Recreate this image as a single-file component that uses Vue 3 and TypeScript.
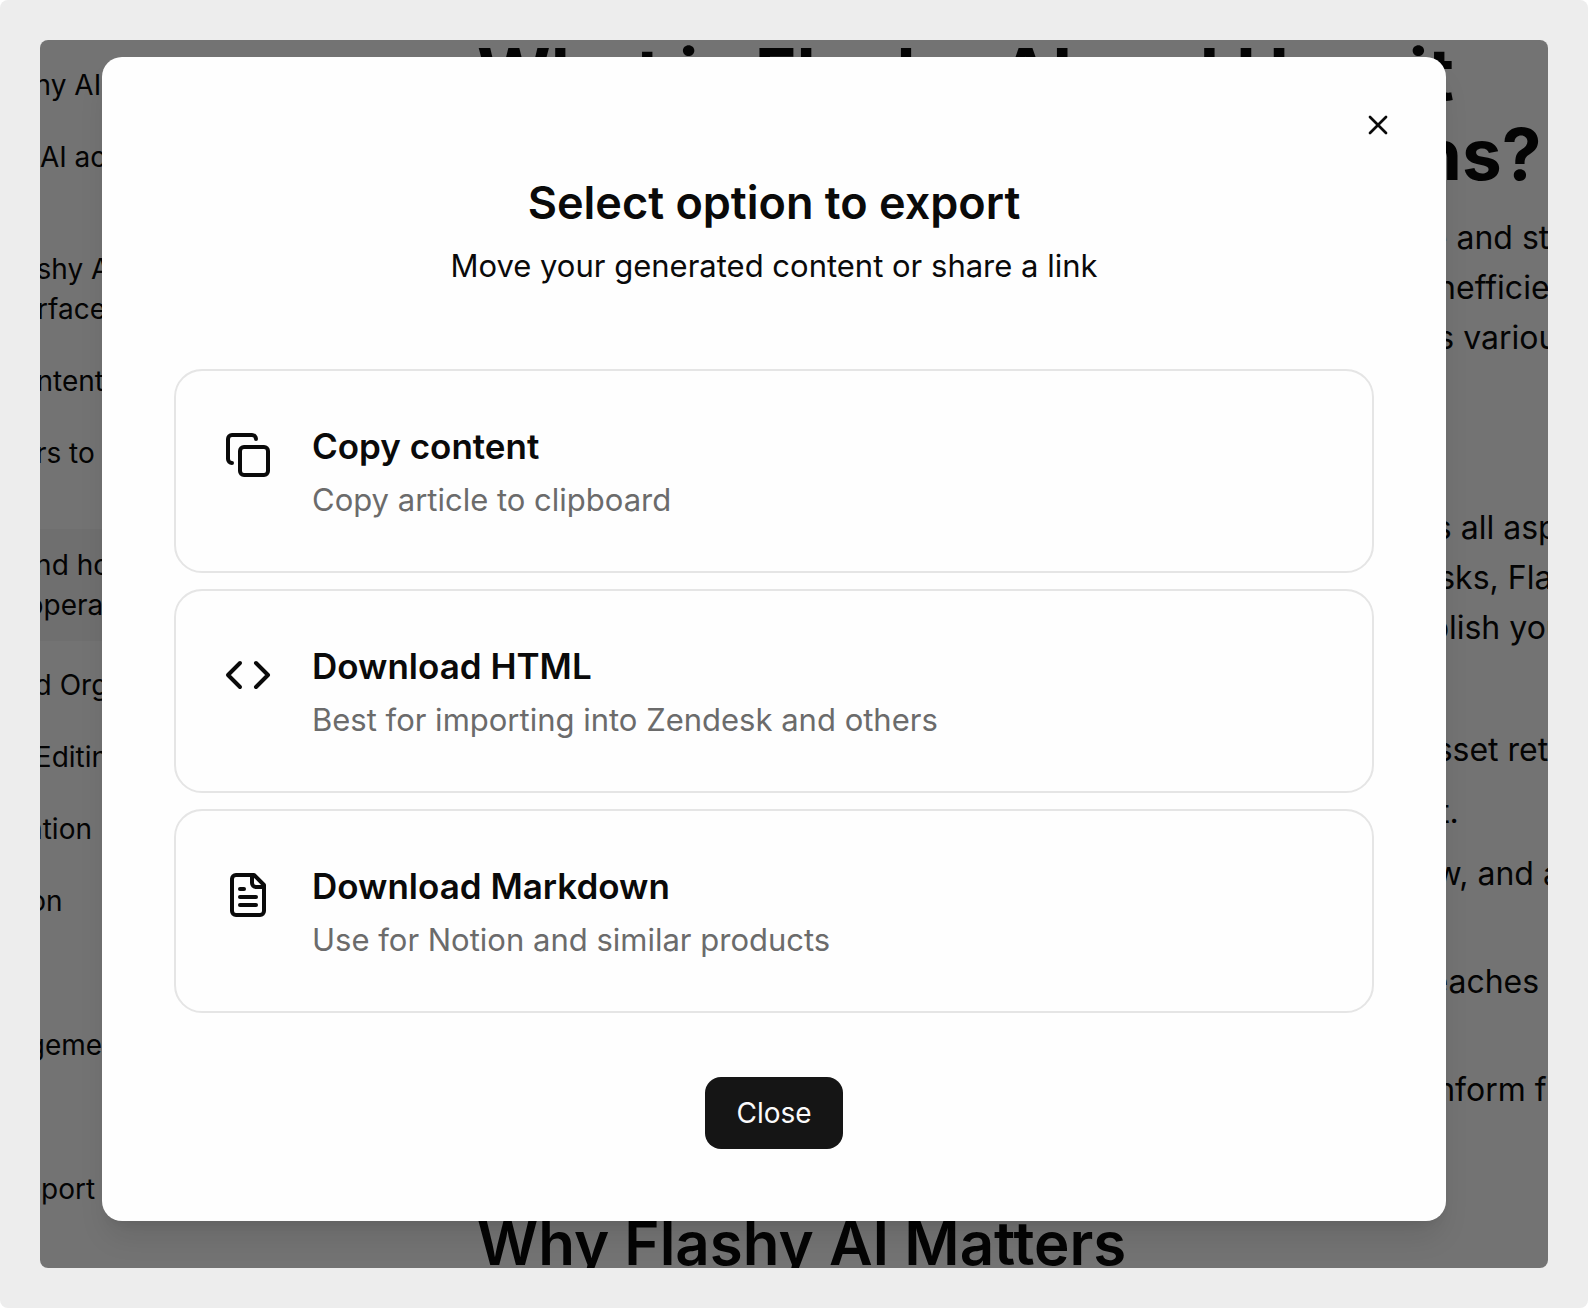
<script setup lang="ts">
interface TocItem {
  lines: string[]
  active?: boolean
}

interface ExportOption {
  title: string
  description: string
  icon: string[]
}

const toc: TocItem[] = [
  { lines: ['How does Flashy AI work'] },
  { lines: ['What is Flashy AI accuracy', 'and tone'] },
  { lines: ['with simple Flashy AI', 'its modern interface'] },
  { lines: ['Writing and Content'] },
  { lines: ['Document Users to', 'content'] },
  { lines: ['Try Flashy AI and how it', 'great modern operations'], active: true },
  { lines: ['Try Storage and Organize'] },
  { lines: ['Asset Content Editing'] },
  { lines: ['Project Automation'] },
  { lines: ['Team Integration'] },
  { lines: ['Workflow'] },
  { lines: ['Process Management'] },
  { lines: ['Analytics'] },
  { lines: ['Data Team Support'] },
]

const headline = ['What is Flashy AI and How it', 'Improves Editorial Operations?']

const intro = [
  'Flashy AI is a reliable platform that helps a teams write, organize and store',
  'knowledge in one place. It replaces any tools, any reviews and inefficient',
  'and scattered documents, and it brings a modern content across various',
]

const features = [
  'With a complete editor and advanced assistant, Flashy AI covers all aspects',
  'of the content lifecycle. From any drafts to custom publishing tasks, Flashy',
  'gives you the important tools to write, review, important and publish your',
]

const capabilities: string[][] = [
  ['Asset library: find powerful files in seconds with advanced asset retrieval'],
  ['Editing: improve clear articles with full suggestions in context.'],
  ['Collaboration: invite useful people to comment, weekly review, and approve', 'every change'],
  ['Publishing: export great articles so that automated content reaches the', 'right readers'],
  ['Analytics: measure simple articles and let advanced results inform future', 'updates'],
]

const options: ExportOption[] = [
  {
    title: 'Copy content',
    description: 'Copy article to clipboard',
    icon: [
      'M10 8h10a2 2 0 0 1 2 2v10a2 2 0 0 1-2 2H10a2 2 0 0 1-2-2V10a2 2 0 0 1 2-2z',
      'M4 16c-1.1 0-2-.9-2-2V4c0-1.1.9-2 2-2h10c1.1 0 2 .9 2 2',
    ],
  },
  {
    title: 'Download HTML',
    description: 'Best for importing into Zendesk and others',
    icon: ['m16 18 6-6-6-6', 'm8 6-6 6 6 6'],
  },
  {
    title: 'Download Markdown',
    description: 'Use for Notion and similar products',
    icon: [
      'M15 2H6a2 2 0 0 0-2 2v16a2 2 0 0 0 2 2h12a2 2 0 0 0 2-2V7Z',
      'M14 2v4a2 2 0 0 0 2 2h4',
      'M10 9H8',
      'M16 13H8',
      'M16 17H8',
    ],
  },
]
</script>

<template>
  <div class="shell">
    <div class="frame">
      <div class="page" aria-hidden="true">
        <nav class="toc">
          <div v-for="(item, i) in toc" :key="i" class="toc-item" :class="{ active: item.active }">
            <span v-for="line in item.lines" :key="line" class="line">{{ line }}</span>
          </div>
        </nav>
        <article class="article">
          <h1><span v-for="line in headline" :key="line" class="line">{{ line }}</span></h1>
          <p><span v-for="line in intro" :key="line" class="line">{{ line }}</span></p>
          <h2>How Flashy AI Works</h2>
          <p><span v-for="line in features" :key="line" class="line">{{ line }}</span></p>
          <p class="list-intro">Core capabilities:</p>
          <ul>
            <li v-for="(item, i) in capabilities" :key="i">
              <span v-for="line in item" :key="line" class="line">{{ line }}</span>
            </li>
          </ul>
          <h2>Why Flashy AI Matters</h2>
        </article>
      </div>

      <div class="overlay">
        <section class="dialog" role="dialog" aria-modal="true" aria-labelledby="export-title">
          <button class="dismiss" type="button" aria-label="Dismiss">
            <svg viewBox="0 0 24 24"><path d="M18 6 6 18" /><path d="m6 6 12 12" /></svg>
          </button>
          <header>
            <h2 id="export-title">Select option to export</h2>
            <p>Move your generated content or share a link</p>
          </header>
          <div class="options">
            <button v-for="option in options" :key="option.title" type="button" class="option">
              <svg viewBox="0 0 24 24" aria-hidden="true">
                <path v-for="d in option.icon" :key="d" :d="d" />
              </svg>
              <span class="option-text">
                <span class="option-title">{{ option.title }}</span>
                <span class="option-desc">{{ option.description }}</span>
              </span>
            </button>
          </div>
          <button class="close" type="button">Close</button>
        </section>
      </div>
    </div>
  </div>
</template>

<style>
body {
  margin: 0;
  background: #fff;
}
</style>

<style scoped>
.shell {
  box-sizing: border-box;
  min-height: 100vh;
  padding: 40px;
  border-radius: 8px;
  background: #ededed;
  font-family: Inter, 'Liberation Sans', sans-serif;
  color: #0a0a0a;
}

.frame {
  position: relative;
  overflow: hidden;
  border-radius: 8px;
  background: #fff;
}

h1,
h2,
p,
ul {
  margin: 0;
  padding: 0;
}

button {
  font: inherit;
  color: inherit;
  cursor: pointer;
}

svg {
  flex: none;
  fill: none;
  stroke: currentColor;
  stroke-width: 2;
  stroke-linecap: round;
  stroke-linejoin: round;
}

.line {
  display: block;
  white-space: nowrap;
}

/* Document behind the dialog, scrolled sideways and clipped by the frame */
.page {
  position: absolute;
  inset: 0;
  display: flex;
  overflow: hidden;
}

.toc {
  flex: 0 0 637px;
  margin-left: -200px;
  padding-top: 9px;
  font-size: 28px;
  line-height: 40px;
}

.toc-item {
  padding: 16px 0;
}

.toc-item.active {
  margin-bottom: 8px;
  background: #f5f5f5;
}

.article {
  flex: 1 0 0;
  margin-top: -6px;
  font-size: 32px;
  line-height: 50px;
}

.article h1 {
  margin-bottom: 19px;
  font-size: 71px;
  line-height: 80px;
  font-weight: 700;
}

.article h2 {
  margin: 48px 0 20px;
  font-size: 60px;
  line-height: 72px;
  font-weight: 600;
  white-space: nowrap;
}

.article .list-intro {
  margin: 12px 0;
}

.article ul {
  display: flex;
  flex-direction: column;
  gap: 16px;
  padding-left: 48px;
  line-height: 46px;
}

.overlay {
  position: relative;
  padding: 17px 102px 47px 62px;
  background: rgba(0, 0, 0, 0.55);
}

.dialog {
  position: relative;
  display: flex;
  flex-direction: column;
  align-items: center;
  padding: 115px 72px 72px;
  border-radius: 20px;
  background: #fefefe;
  box-shadow:
    0 20px 30px -6px rgba(0, 0, 0, 0.1),
    0 8px 12px -8px rgba(0, 0, 0, 0.1);
}

.dismiss {
  position: absolute;
  top: 52px;
  right: 52px;
  display: flex;
  padding: 0;
  border: 0;
  background: none;
}

.dismiss svg {
  width: 32px;
  height: 32px;
}

header {
  display: flex;
  flex-direction: column;
  gap: 8px;
  text-align: center;
}

header h2 {
  font-size: 45px;
  line-height: 62px;
  font-weight: 600;
}

header p {
  font-size: 31px;
  line-height: 48px;
}

.options {
  align-self: stretch;
  display: flex;
  flex-direction: column;
  gap: 16px;
  margin: 79px 0 64px;
}

.option {
  display: flex;
  align-items: flex-start;
  gap: 40px;
  padding: 47px 48px;
  border: 2px solid #e5e5e5;
  border-radius: 28px;
  background: none;
  text-align: left;
}

.option svg {
  width: 48px;
  height: 48px;
  margin-top: 13px;
}

.option-text {
  display: flex;
  flex-direction: column;
  gap: 2px;
}

.option-title {
  font-size: 35px;
  line-height: 56px;
  font-weight: 600;
}

.option-desc {
  font-size: 31px;
  line-height: 48px;
  color: #6b6b6b;
}

.close {
  padding: 16px 31px;
  border: 0;
  border-radius: 16px;
  background: #151515;
  color: #fafafa;
  font-size: 28px;
  line-height: 40px;
}
</style>
